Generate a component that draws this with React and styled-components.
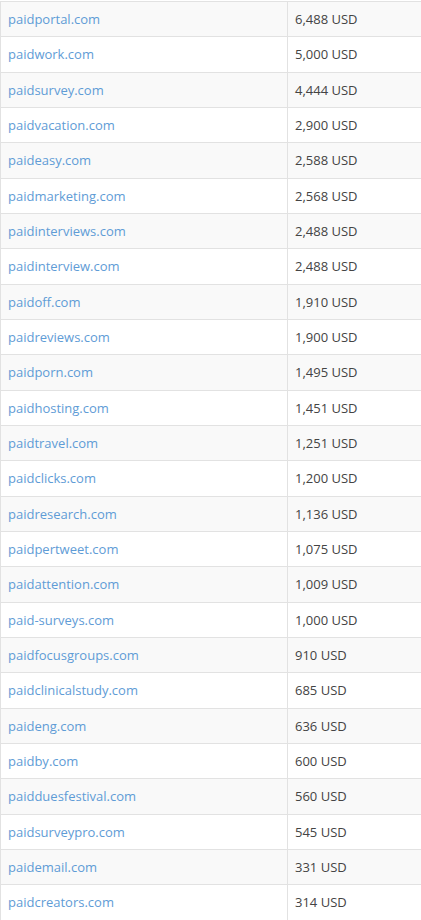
import React from 'react';
import styled, { createGlobalStyle } from 'styled-components';

const GlobalStyle = createGlobalStyle`
body {
  margin: 0;
  background: white;
  font-family: "Open Sans", "Liberation Sans", sans-serif;
}
`

const Table = styled.table`
width: 430px;
margin-top: 1px;
border-collapse: collapse;
font-size: 13px;
color: #444;
`

const Row = styled.tr`
height: 35.33px;
background: ${props => props.striped ? "#f9f9f9" : "white"};
`

const Cell = styled.td`
border: 1px solid #e2e2e2;
padding: 0px 7px;
vertical-align: middle;
width: ${props => props.w}px;
`

const DomainLink = styled.a`
color: #5f9cd6;
text-decoration: none;
`

const domains = [
  ["paidportal.com", "6,488"],
  ["paidwork.com", "5,000"],
  ["paidsurvey.com", "4,444"],
  ["paidvacation.com", "2,900"],
  ["paideasy.com", "2,588"],
  ["paidmarketing.com", "2,568"],
  ["paidinterviews.com", "2,488"],
  ["paidinterview.com", "2,488"],
  ["paidoff.com", "1,910"],
  ["paidreviews.com", "1,900"],
  ["paidporn.com", "1,495"],
  ["paidhosting.com", "1,451"],
  ["paidtravel.com", "1,251"],
  ["paidclicks.com", "1,200"],
  ["paidresearch.com", "1,136"],
  ["paidpertweet.com", "1,075"],
  ["paidattention.com", "1,009"],
  ["paid-surveys.com", "1,000"],
  ["paidfocusgroups.com", "910"],
  ["paidclinicalstudy.com", "685"],
  ["paideng.com", "636"],
  ["paidby.com", "600"],
  ["paidduesfestival.com", "560"],
  ["paidsurveypro.com", "545"],
  ["paidemail.com", "331"],
  ["paidcreators.com", "314"],
];

export default function App() {
  return (
    <>
      <GlobalStyle />
      <Table>
        <tbody>
          {domains.map(([name, price], i) => (
            <Row key={name} striped={i % 2 === 0}>
              <Cell w={272}><DomainLink href="#">{name}</DomainLink></Cell>
              <Cell>{price} USD</Cell>
            </Row>
          ))}
        </tbody>
      </Table>
    </>
  )
}
